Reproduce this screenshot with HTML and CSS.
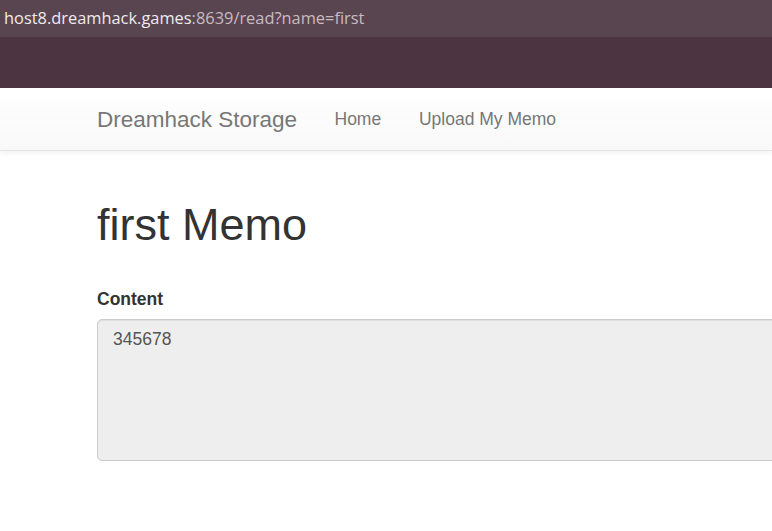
FILE: index.html
```html
<!DOCTYPE html>
<html lang="en">
<head>
<meta charset="utf-8">
<title>Dreamhack Storage</title>
<link rel="stylesheet" href="styles.css">
</head>
<body>
<div class="chrome">
  <div class="urlbar"><span class="host">host8.dreamhack.games</span><span class="path">:8639/read?name=first</span></div>
  <div class="band"></div>
</div>
<nav class="navbar">
  <div class="container nav-inner">
    <a class="brand" href="#">Dreamhack Storage</a>
    <a class="nav-link" href="#">Home</a>
    <a class="nav-link" href="#">Upload My Memo</a>
  </div>
</nav>
<main class="container main">
  <h1 class="title">first Memo</h1>
  <div class="form-group">
    <label class="label">Content</label>
    <div class="textarea">345678</div>
  </div>
</main>
</body>
</html>
```

FILE: styles.css
```css
html, body {
  margin: 0;
  padding: 0;
  background: #fff;
  overflow: hidden;
}
body {
  font-family: "Liberation Sans", Arial, sans-serif;
  width: 772px;
  height: 531px;
}
.chrome {
  display: flex;
  flex-direction: column;
}
.urlbar {
  height: 37px;
  background: #594550;
  box-sizing: border-box;
  padding: 5px 0 0 4px;
  font-family: "Open Sans", "Noto Sans", sans-serif;
  font-size: 16.4px;
  line-height: 25px;
  white-space: nowrap;
}
.host { color: #f0eaed; }
.path { color: #c8bbc1; }
.band {
  height: 51px;
  background: #4c3440;
}
.navbar {
  height: 63px;
  box-sizing: border-box;
  background: linear-gradient(to bottom, #ffffff 0%, #f8f8f8 100%);
  border-bottom: 1px solid #e4e4e4;
  box-shadow: 0 1px 6px rgba(0,0,0,0.08);
}
.container {
  padding-left: 97px;
}
.main {
  overflow: hidden;
}
.nav-inner {
  display: flex;
  align-items: center;
  height: 62px;
}
.brand {
  font-size: 22.5px;
  line-height: 25px;
  color: #777;
  text-decoration: none;
  padding-right: 18.5px;
}
.nav-link {
  font-size: 17.5px;
  line-height: 25px;
  color: #777;
  text-decoration: none;
  padding: 0 18.9px;
}
.title {
  margin: 49px 0 0 0;
  font-size: 45px;
  line-height: 49.5px;
  font-weight: 500;
  color: #333;
}
.form-group {
  display: flex;
  flex-direction: column;
  margin-top: 37px;
}
.label {
  font-size: 17.5px;
  line-height: 25px;
  font-weight: bold;
  color: #333;
  margin-bottom: 7px;
}
.textarea {
  width: calc(100% + 10px);
  height: 142px;
  box-sizing: border-box;
  background: #eeeeee;
  border: 1px solid #cccccc;
  border-radius: 5px;
  box-shadow: inset 0 1px 1px rgba(0,0,0,0.075);
  padding: 7.5px 15px;
  font-size: 17.5px;
  line-height: 25px;
  color: #555;
}
```
